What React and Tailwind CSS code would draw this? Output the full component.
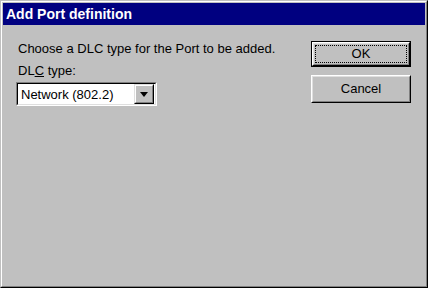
export default function App() {
  return (
    <div
      className="w-[428px] h-[288px] bg-[#c0c0c0] border border-t-[#c0c0c0] border-l-[#c0c0c0] border-r-black border-b-black"
      style={{ fontFamily: '"Liberation Sans", Arial, sans-serif' }}
    >
      <div className="h-full border border-t-white border-l-white border-r-[#808080] border-b-[#808080] p-px flex flex-col">
        <div className="h-[22px] bg-[#000080] text-white font-bold text-[14px] leading-[22px] pl-[3px]">
          Add Port definition
        </div>
        <div className="flex-1 flex justify-between pl-[15px] pr-[14px] pt-[16px]">
          <div className="flex flex-col text-[13px] text-black">
            <div className="leading-[15px]">Choose a DLC type for the Port to be added.</div>
            <div className="mt-[7px] leading-[15px]">
              DL<span className="underline">C</span> type:
            </div>
            <div className="mt-[4px] -ml-[2px] w-[141px] h-[24px] border border-t-[#808080] border-l-[#808080] border-r-white border-b-white">
              <div className="h-full border border-t-black border-l-black border-r-[#dfdfdf] border-b-[#dfdfdf] bg-white flex items-center justify-between">
                <span className="pl-[3px] leading-[15px]">Network (802.2)</span>
                <div className="w-[20px] h-[20px] mr-px bg-[#c0c0c0] border border-t-[#dfdfdf] border-l-[#dfdfdf] border-r-black border-b-black">
                  <div className="h-full border border-t-white border-l-white border-r-[#808080] border-b-[#808080] flex items-center justify-center">
                    <svg width="8" height="5" viewBox="0 0 8 5">
                      <path d="M0 0h8L4 5z" fill="black" />
                    </svg>
                  </div>
                </div>
              </div>
            </div>
          </div>
          <div className="flex flex-col gap-[8px] text-[13px] text-black">
            <div className="w-[100px] h-[26px] border border-black">
              <div className="h-full border border-t-white border-l-white border-r-black border-b-black">
                <div className="h-full border border-t-[#dfdfdf] border-l-[#dfdfdf] border-r-[#808080] border-b-[#808080] p-px">
                  <div className="h-full border border-dotted border-black flex items-center justify-center">
                    OK
                  </div>
                </div>
              </div>
            </div>
            <div className="w-[100px] h-[28px] border border-t-white border-l-white border-r-black border-b-black">
              <div className="h-full border border-t-[#dfdfdf] border-l-[#dfdfdf] border-r-[#808080] border-b-[#808080] flex items-center justify-center">
                Cancel
              </div>
            </div>
          </div>
        </div>
      </div>
    </div>
  );
}
